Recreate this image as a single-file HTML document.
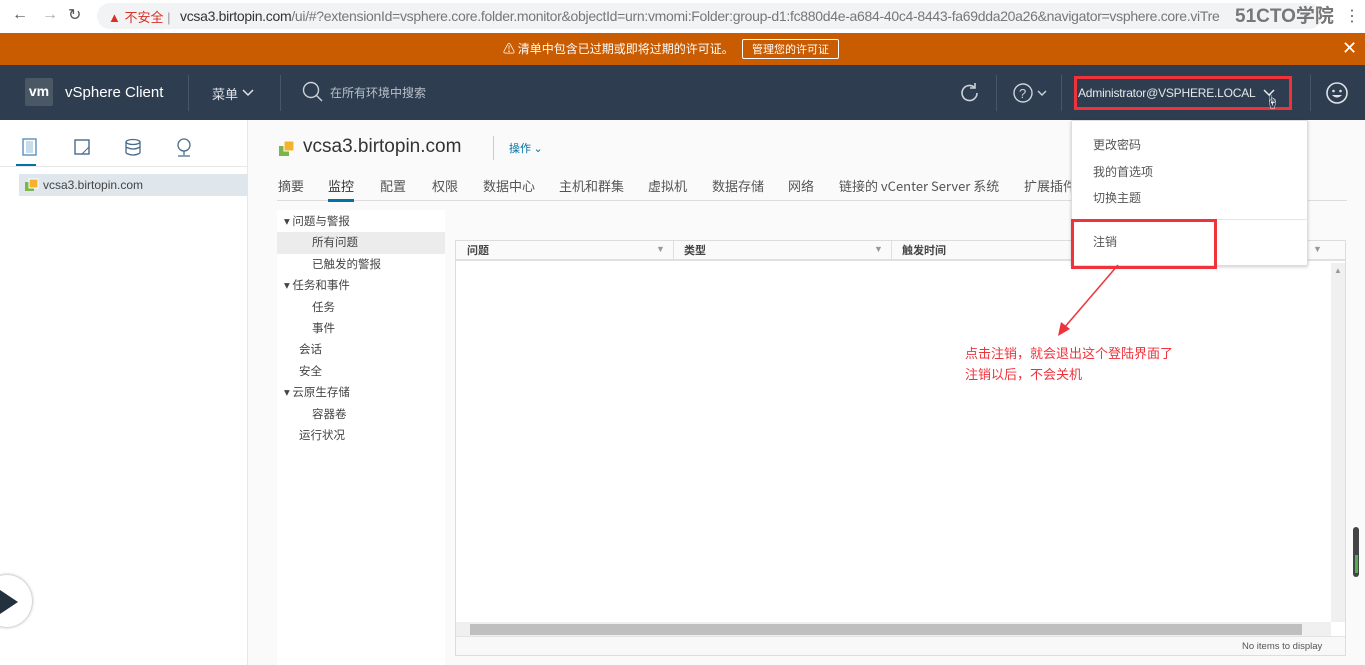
<!DOCTYPE html>
<html><head><meta charset="utf-8"><style>
*{margin:0;padding:0;box-sizing:border-box}
body{width:1365px;height:665px;overflow:hidden;position:relative;background:#fafafa;font-family:"Liberation Sans","Noto Sans CJK SC",sans-serif;color:#333}
.a{position:absolute;white-space:nowrap}
.cj{font-family:"Noto Sans CJK SC",sans-serif}
</style></head><body>
<!-- browser bar -->
<div class="a" style="left:0;top:0;width:1365px;height:33px;background:#fff"></div>
<div class="a" style="left:12px;top:6px;font-size:16px;color:#555">←</div>
<div class="a" style="left:42px;top:6px;font-size:16px;color:#aaa">→</div>
<div class="a" style="left:68px;top:5px;font-size:16px;color:#555">↻</div>
<div class="a" style="left:97px;top:3px;width:1225px;height:26px;background:#f1f3f4;border-radius:13px"></div>
<div class="a" style="left:108px;top:7px;font-size:13px;color:#d93025">▲ <span class="cj">不安全</span> <span style="color:#999">|</span></div>
<div class="a" style="left:180px;top:8px;width:1040px;overflow:hidden;font-size:14px;color:#333;letter-spacing:-0.3px">vcsa3.birtopin.com<span style="color:#777">/ui/#?extensionId=vsphere.core.folder.monitor&amp;objectId=urn:vmomi:Folder:group-d1:fc880d4e-a684-40c4-8443-fa69dda20a26&amp;navigator=vsphere.core.viTre...</span></div>
<div class="a" style="left:1235px;top:1px;font-size:19px;font-weight:bold;color:#777">51CTO<span class="cj">学院</span></div>
<div class="a" style="left:1344px;top:6px;font-size:16px;color:#666">⋮</div>
<!-- orange banner -->
<div class="a" style="left:0;top:33px;width:1365px;height:32px;background:#c95b00"></div>
<div class="a cj" style="left:503px;top:40px;font-size:12px;color:#fff">⚠ 清单中包含已过期或即将过期的许可证。</div>
<div class="a cj" style="left:742px;top:39px;width:97px;height:20px;border:1px solid #fff;border-radius:2px;font-size:11px;color:#fff;text-align:center;line-height:18px">管理您的许可证</div>
<div class="a" style="left:1342px;top:38px;font-size:18px;color:#fff">✕</div>
<!-- header -->
<div class="a" style="left:0;top:65px;width:1365px;height:55px;background:#2e3e50"></div>
<div class="a" style="left:25px;top:78px;width:28px;height:28px;background:#4a5866;border-radius:2px;color:#fff;font-weight:bold;font-size:14px;text-align:center;line-height:27px">vm</div>
<div class="a" style="left:65px;top:84px;font-size:15px;color:#fff">vSphere Client</div>
<div class="a" style="left:188px;top:75px;width:1px;height:36px;background:#475668"></div>
<div class="a cj" style="left:212px;top:84px;font-size:13px;color:#dfe3e7">菜单</div>
<svg class="a" style="left:241px;top:88px" width="14" height="10"><path d="M2 2l5 5 5-5" stroke="#dfe3e7" stroke-width="1.5" fill="none"/></svg>
<div class="a" style="left:280px;top:75px;width:1px;height:36px;background:#475668"></div>
<svg class="a" style="left:302px;top:81px" width="22" height="22"><circle cx="9" cy="9" r="7.5" stroke="#cdd3da" stroke-width="1.4" fill="none"/><path d="M14 14l6 6" stroke="#cdd3da" stroke-width="1.4"/></svg>
<div class="a cj" style="left:330px;top:84px;font-size:12px;color:#b8c0c9">在所有环境中搜索</div>
<svg class="a" style="left:958px;top:81px" width="24" height="24"><path d="M19 12a7.5 7.5 0 1 1-3-6" stroke="#cdd3da" stroke-width="1.6" fill="none"/><path d="M17 2v5h-5" stroke="#cdd3da" stroke-width="1.6" fill="none"/></svg>
<div class="a" style="left:996px;top:75px;width:1px;height:36px;background:#475668"></div>
<svg class="a" style="left:1012px;top:81px" width="40" height="24"><circle cx="11" cy="12" r="9" stroke="#cdd3da" stroke-width="1.4" fill="none"/><text x="7" y="17" font-size="13" fill="#cdd3da" font-family="Liberation Sans">?</text><path d="M26 10l4 4 4-4" stroke="#cdd3da" stroke-width="1.4" fill="none"/></svg>
<div class="a" style="left:1061px;top:75px;width:1px;height:36px;background:#475668"></div>
<div class="a" style="left:1074px;top:76px;width:218px;height:34px;border:3px solid #f0323b"></div>
<div class="a" style="left:1078px;top:86px;font-size:12px;color:#e6e9ec;letter-spacing:-0.2px">Administrator@VSPHERE.LOCAL</div>
<svg class="a" style="left:1262px;top:88px" width="14" height="10"><path d="M2 2l5 5 5-5" stroke="#e6e9ec" stroke-width="1.5" fill="none"/></svg>
<div class="a" style="left:1265px;top:92px;font-size:14px;color:#fff">☝</div>
<div class="a" style="left:1310px;top:75px;width:1px;height:36px;background:#475668"></div>
<svg class="a" style="left:1325px;top:81px" width="24" height="24"><circle cx="12" cy="12" r="10" stroke="#dfe3e7" stroke-width="1.6" fill="none"/><circle cx="8.5" cy="10" r="1.3" fill="#dfe3e7"/><circle cx="15.5" cy="10" r="1.3" fill="#dfe3e7"/><path d="M7 14q5 5 10 0z" fill="#dfe3e7"/></svg>
<!-- left panel -->
<div class="a" style="left:0;top:120px;width:248px;height:545px;background:#fff;border-right:1px solid #e8e8e8"></div>
<svg class="a" style="left:20px;top:137px" width="180" height="22">
<rect x="3" y="2" width="13" height="16" fill="none" stroke="#5a8fc0" stroke-width="1.4"/><rect x="6" y="4" width="7" height="12" fill="#c9dcea"/>
<rect x="55" y="3" width="14" height="14" fill="none" stroke="#4a6a88" stroke-width="1.4"/><path d="M62 17l7-7" stroke="#4a6a88"/>
<ellipse cx="113" cy="5" rx="7" ry="2.5" fill="none" stroke="#4a6a88" stroke-width="1.3"/><path d="M106 5v11M120 5v11M106 10q7 4 14 0M106 16q7 4 14 0" stroke="#4a6a88" stroke-width="1.3" fill="none"/>
<circle cx="164" cy="8" r="6" fill="none" stroke="#4a6a88" stroke-width="1.3"/><path d="M164 14v4M158 19h12" stroke="#4a6a88" stroke-width="1.3"/></svg>
<div class="a" style="left:16px;top:164px;width:20px;height:2px;background:#0072a3"></div>
<div class="a" style="left:0;top:166px;width:248px;height:1px;background:#e8e8e8"></div>
<div class="a" style="left:19px;top:174px;width:229px;height:22px;background:#dfe6ec"></div>
<svg class="a" style="left:24px;top:178px" width="16" height="14"><rect x="1" y="4" width="9" height="9" fill="#7ab648"/><rect x="5" y="1" width="9" height="9" fill="#f3b32d" stroke="#fff"/></svg>
<div class="a" style="left:43px;top:178px;font-size:12px;color:#444">vcsa3.birtopin.com</div>
<div class="a" style="left:-18px;top:575px;width:50px;height:52px;background:#fff;border-radius:50%;box-shadow:0 0 3px #999"></div>
<svg class="a" style="left:0;top:590px" width="20" height="24"><path d="M0 0l18 12-18 12z" fill="#23303e"/></svg>
<!-- main header -->
<svg class="a" style="left:278px;top:140px" width="18" height="18"><rect x="1" y="6" width="10" height="10" fill="#7ab648"/><rect x="6" y="1" width="10" height="10" fill="#f3b32d" stroke="#fff"/></svg>
<div class="a" style="left:303px;top:136px;font-size:19px;color:#333">vcsa3.birtopin.com</div>
<div class="a" style="left:493px;top:136px;width:1px;height:24px;background:#ccc"></div>
<div class="a cj" style="left:509px;top:140px;font-size:11px;color:#0072a3">操作 ⌄</div>
<div class="a cj" style="left:278px;top:176px;font-size:13px;color:#555">
<span style="position:absolute;left:0">摘要</span><span style="position:absolute;left:50px;color:#333">监控</span><span style="position:absolute;left:102px">配置</span><span style="position:absolute;left:154px">权限</span><span style="position:absolute;left:205px">数据中心</span><span style="position:absolute;left:281px">主机和群集</span><span style="position:absolute;left:370px">虚拟机</span><span style="position:absolute;left:434px">数据存储</span><span style="position:absolute;left:510px">网络</span><span style="position:absolute;left:561px">链接的 vCenter Server 系统</span><span style="position:absolute;left:746px">扩展插件</span></div>
<div class="a" style="left:277px;top:200px;width:1070px;height:1px;background:#ddd"></div>
<div class="a" style="left:328px;top:199px;width:26px;height:3px;background:#0072a3"></div>
<!-- tree -->
<div class="a" style="left:277px;top:210px;width:168px;height:455px;background:#fff"></div>
<div class="a" style="left:277px;top:232px;width:168px;height:22px;background:#ececec"></div>
<div class="a cj" style="left:284px;top:211px;font-size:11.5px;color:#444;line-height:21.4px">
<div>▾ 问题与警报</div><div style="padding-left:28px">所有问题</div><div style="padding-left:28px">已触发的警报</div><div>▾ 任务和事件</div><div style="padding-left:28px">任务</div><div style="padding-left:28px">事件</div><div style="padding-left:15px">会话</div><div style="padding-left:15px">安全</div><div>▾ 云原生存储</div><div style="padding-left:28px">容器卷</div><div style="padding-left:15px">运行状况</div></div>
<!-- table -->
<div class="a" style="left:455px;top:240px;width:891px;height:416px;background:#fff;border:1px solid #ddd"></div>
<div class="a" style="left:456px;top:241px;width:889px;height:20px;background:#fafafa;border-bottom:2px solid #e0e0e0"></div>
<div class="a cj" style="left:467px;top:242px;font-size:11px;color:#444;font-weight:bold">问题</div>
<div class="a" style="left:656px;top:244px;font-size:9px;color:#999">▼</div>
<div class="a" style="left:673px;top:241px;width:1px;height:20px;background:#e0e0e0"></div>
<div class="a cj" style="left:684px;top:242px;font-size:11px;color:#444;font-weight:bold">类型</div>
<div class="a" style="left:874px;top:244px;font-size:9px;color:#999">▼</div>
<div class="a" style="left:891px;top:241px;width:1px;height:20px;background:#e0e0e0"></div>
<div class="a cj" style="left:902px;top:242px;font-size:11px;color:#444;font-weight:bold">触发时间</div>
<div class="a" style="left:1313px;top:244px;font-size:9px;color:#999">▼</div>
<div class="a" style="left:1331px;top:263px;width:14px;height:359px;background:#f0f0f0"></div>
<div class="a" style="left:1334px;top:266px;font-size:8px;color:#999">▲</div>
<div class="a" style="left:456px;top:622px;width:875px;height:14px;background:#f0f0f0"></div>
<div class="a" style="left:470px;top:624px;width:832px;height:11px;background:#bfbfbf"></div>
<div class="a" style="left:456px;top:636px;width:889px;height:19px;background:#f8f8f8;border-top:1px solid #e3e3e3"></div>
<div class="a" style="left:1242px;top:641px;font-size:9.5px;color:#555">No items to display</div>
<div class="a" style="left:1353px;top:527px;width:6px;height:50px;background:#444;border-radius:3px"></div>
<div class="a" style="left:1355px;top:555px;width:3px;height:18px;background:#4caf50"></div>
<!-- dropdown -->
<div class="a" style="left:1071px;top:120px;width:237px;height:146px;background:#fff;border:1px solid #ddd;box-shadow:0 1px 3px rgba(0,0,0,.2);border-radius:2px"></div>
<div class="a cj" style="left:1093px;top:132px;font-size:12px;color:#555;line-height:26.5px"><div>更改密码</div><div>我的首选项</div><div>切换主题</div></div>
<div class="a" style="left:1072px;top:219px;width:235px;height:1px;background:#e6e6e6"></div>
<div class="a cj" style="left:1093px;top:233px;font-size:12px;color:#555">注销</div>
<div class="a" style="left:1071px;top:219px;width:146px;height:50px;border:3px solid #f0323b"></div>
<!-- annotation -->
<svg class="a" style="left:1050px;top:262px" width="80" height="80"><path d="M68 3L14 66" stroke="#f0323b" stroke-width="1.5"/><path d="M8 74l3-14 9 7z" fill="#f0323b"/></svg>
<div class="a cj" style="left:965px;top:342px;font-size:13px;color:#f0323b;line-height:21px">点击注销，就会退出这个登陆界面了<br>注销以后，不会关机</div>
</body></html>
